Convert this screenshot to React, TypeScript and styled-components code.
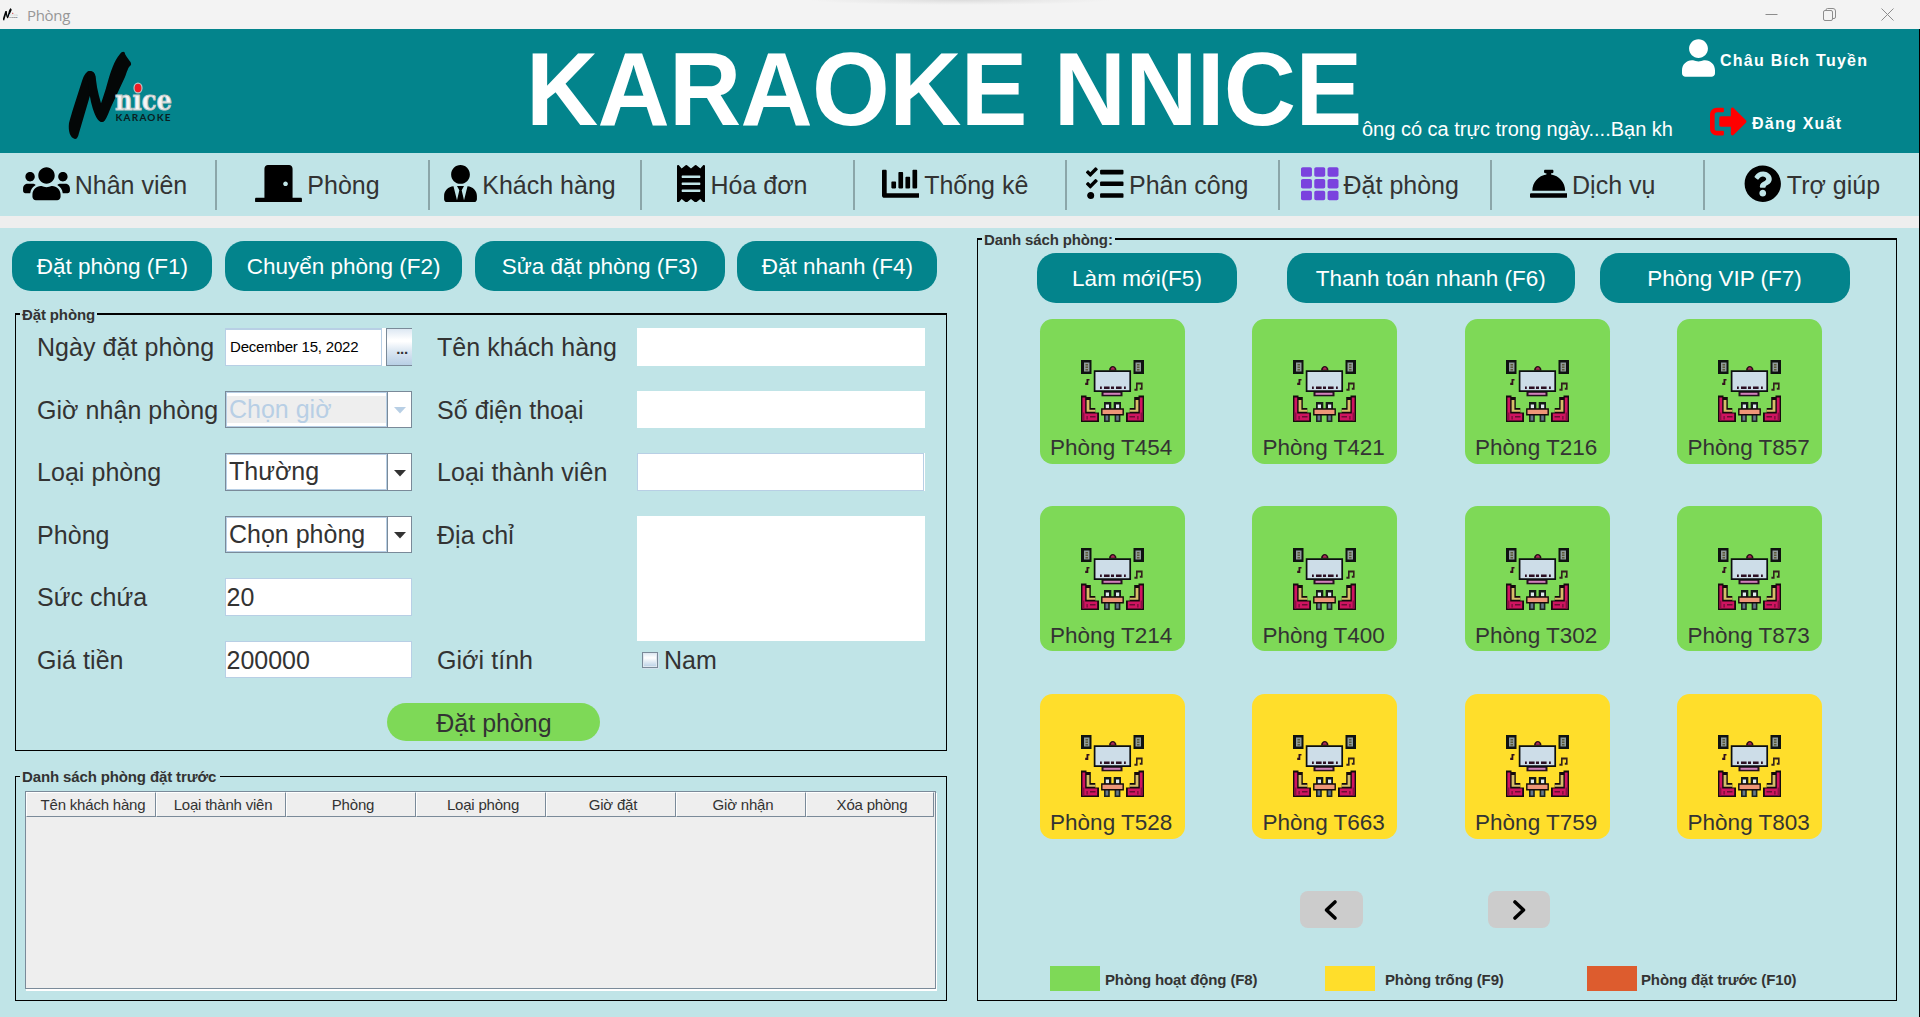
import React from "react";
import styled, { createGlobalStyle } from "styled-components";
import {
  FaUsers,
  FaDoorClosed,
  FaUserTie,
  FaReceipt,
  FaChartBar,
  FaTasks,
  FaTh,
  FaConciergeBell,
  FaQuestionCircle,
  FaUser,
  FaSignOutAlt,
} from "react-icons/fa";

const teal = "#03848c";
const pale = "#c0e4e7";
const grey = "#eeeeee";
const ink = "#333333";
const line = "#7a8a99";
const softLine = "#b8cfe5";
const green = "#7ed957";
const yellow = "#ffde2b";
const orange = "#dd5c2e";

const GlobalStyle = createGlobalStyle`
  * { box-sizing: border-box; }
  body {
    margin: 0;
    background: ${pale};
    color: ${ink};
    font-family: "Liberation Sans", Arial, sans-serif;
    overflow: hidden;
  }
  button, input { font: inherit; color: inherit; }
`;

const Window = styled.div`
  width: 1920px;
  height: 1017px;
  display: flex;
  flex-direction: column;
  background: ${pale};
  overflow: hidden;
`;

/* ---------- title bar ---------- */

const TitleBar = styled.header`
  height: 29px;
  flex: none;
  display: flex;
  align-items: center;
  padding: 0 26px 0 2px;
  background: radial-gradient(ellipse 150px 5px at 960px 0, #dcdcdc 0%, #ebebeb 60%, #f3f3f3 100%);
`;

const WindowTitle = styled.span`
  margin-left: 8px;
  font: 15px/20px "Open Sans", "Noto Sans", sans-serif;
  letter-spacing: -0.3px;
  color: #979797;
  flex: 1;
`;

const WindowControls = styled.div`
  display: flex;
  gap: 45px;
  margin-bottom: 1px;
`;

const Frame = styled.div`
  flex: 1;
  display: flex;
  flex-direction: column;
  border-right: 1px solid #000;
`;

/* ---------- banner ---------- */

const Banner = styled.div`
  height: 124px;
  flex: none;
  display: flex;
  background: ${teal};
  color: #fff;
  padding-left: 62px;
`;

const LogoSlot = styled.div`
  width: 464px;
  padding-top: 17px;
`;

const BrandTitle = styled.h1`
  margin: 0;
  width: 836px;
  padding-top: 3px;
  font-size: 100px;
  line-height: 114px;
  font-weight: bold;
  letter-spacing: -0.7px;
  white-space: nowrap;
  transform: scaleY(1.045);
`;

const Ticker = styled.div`
  width: 312px;
  height: 24px;
  margin-top: 88px;
  font-size: 20px;
  line-height: 24px;
  white-space: nowrap;
  overflow: hidden;
`;

const Account = styled.div`
  display: flex;
  flex-direction: column;
  padding: 10px 0 0 8px;
`;

const AccountRow = styled.div<{ $indent: number; $gap: number }>`
  display: flex;
  align-items: center;
  gap: 5px;
  height: 38px;
  margin-left: ${(p) => p.$indent}px;
  margin-bottom: ${(p) => p.$gap}px;
  font-size: 16px;
  font-weight: bold;
  letter-spacing: 1.25px;
  white-space: nowrap;
`;

const AccountText = styled.span`
  padding-top: 5px;
`;

/* ---------- navigation ---------- */

const Nav = styled.nav`
  height: 63px;
  flex: none;
  display: flex;
  padding: 7px 0 6px 4.5px;
`;

const NavItem = styled.a<{ $last: boolean }>`
  width: 212.5px;
  height: 50px;
  flex: none;
  display: flex;
  align-items: center;
  justify-content: center;
  gap: 5px;
  padding: ${(p) => (p.$last ? "0 0 0 3px" : "0 9.5px 0 0")};
  border-right: ${(p) => (p.$last ? "none" : "2px solid #8ba6a9")};
  font-size: 25px;
  line-height: 30px;
  white-space: nowrap;
  svg { color: #000; flex: none; margin-top: -3.5px; }
`;

const NavLabel = styled.span`
  margin-top: 0;
`;

const Strip = styled.div`
  height: 12px;
  flex: none;
  background: ${grey};
`;

/* ---------- body ---------- */

const Main = styled.main`
  flex: 1;
  display: flex;
  align-items: flex-start;
`;

const LeftSide = styled.section`
  width: 977px;
  padding-top: 13px;
`;

const Actions = styled.div`
  display: flex;
  gap: 12.5px;
  padding-left: 12.4px;
  margin-bottom: 15px;
`;

const Pill = styled.button<{ $w: number }>`
  width: ${(p) => p.$w}px;
  height: 50px;
  padding: 1px 0 0;
  border: 0;
  border-radius: 19px;
  background: ${teal};
  color: #fff;
  font-size: 22.5px;
  line-height: 50px;
  white-space: nowrap;
`;

const Panel = styled.fieldset<{ $h: number; $top: number }>`
  min-width: 0;
  height: ${(p) => p.$h}px;
  margin: 0;
  padding: 0;
  border: 1px solid #000;
  border-top-width: ${(p) => p.$top}px;
`;

const PanelTitle = styled.legend<{ $h: number; $right?: number }>`
  margin-left: 4px;
  padding: 0 ${(p) => p.$right ?? 2}px 0 2px;
  height: ${(p) => p.$h}px;
  font-size: 15px;
  font-weight: bold;
  letter-spacing: -0.13px;
  line-height: ${(p) => p.$h + 1}px;
`;

const LeftPanel = styled(Panel)`
  width: 932px;
  margin-left: 15px;
`;

const BookingsPanel = styled(LeftPanel)`
  margin-top: 17px;
`;

const Form = styled.div`
  display: grid;
  grid-template-columns: 187px 212px 200px 288px;
  grid-template-rows: repeat(6, 62.5px);
  padding: 6.4px 0 0 22px;
`;

const Label = styled.label<{ $col: number; $row: number }>`
  grid-column: ${(p) => p.$col};
  grid-row: ${(p) => p.$row};
  font-size: 25px;
  line-height: 38px;
  white-space: nowrap;
  letter-spacing: 0.05px;
  margin-left: ${(p) => (p.$col === 1 ? -1 : 0)}px;
`;

const Cell = styled.div<{ $col: number; $row: number; $span?: number }>`
  grid-column: ${(p) => p.$col};
  grid-row: ${(p) => p.$row} / span ${(p) => p.$span ?? 1};
  width: ${(p) => (p.$col === 2 ? 187 : 288)}px;
  height: ${(p) => (p.$span ? 125 : 37.5)}px;
`;

const TextBox = styled.input<{ $edge?: string }>`
  display: block;
  width: 100%;
  height: 100%;
  padding: 1px 0 0 0.5px;
  border: ${(p) => (p.$edge ? `1px solid ${p.$edge}` : "0")};
  background: #fff;
  font-size: 25px;
  outline: none;
`;

const TypeBox = styled(TextBox)`
  width: 287px;
  box-shadow: 1px 0 #fff;
`;

const AddressBox = styled.textarea`
  display: block;
  width: 100%;
  height: 100%;
  border: 0;
  resize: none;
  background: #fff;
`;

const DateField = styled.div`
  height: 100%;
  display: flex;
  gap: 4px;
  background: #fff;
`;

const DateText = styled.div`
  width: 157px;
  padding-left: 4px;
  border: 1px solid ${softLine};
  border-top-width: 2px;
  font-size: 15px;
  line-height: 34px;
  letter-spacing: -0.2px;
  color: #000;
`;

const DateButton = styled.button`
  width: 26px;
  padding: 3px 0 0 5px;
  border: 1px solid ${line};
  border-right: 0;
  background: linear-gradient(#dde8f3, #fff 30%, #fff 35%, #dde8f3 60%, #b8cfe5);
  font-size: 15px;
  font-weight: bold;
  line-height: 15px;
  letter-spacing: -0.4px;
`;

const ComboBox = styled.div`
  height: 100%;
  display: flex;
  background: #fff;
  border: 1px solid ${line};
`;

const ComboValue = styled.div<{ $off?: boolean }>`
  width: 161px;
  border: 1px solid ${softLine};
  padding: ${(p) => (p.$off ? "3px 0" : "0")};
  color: ${(p) => (p.$off ? softLine : ink)};
  display: flex;
  span {
    flex: 1;
    padding-left: 2px;
    background: ${(p) => (p.$off ? grey : "#fff")};
    font-size: 25px;
    line-height: ${(p) => (p.$off ? 26 : 32.5)}px;
    white-space: nowrap;
  }
`;

const ComboArrow = styled.div<{ $off?: boolean }>`
  flex: 1;
  border-left: 1px solid ${line};
  display: flex;
  align-items: center;
  justify-content: center;
  color: ${(p) => (p.$off ? softLine : ink)};
  svg { margin-top: 2px; }
`;

const CheckRow = styled.div`
  display: flex;
  align-items: center;
  height: 38px;
  padding-left: 5px;
  gap: 6px;
  font-size: 25px;
  line-height: 38px;
`;

const CheckBox = styled.span`
  width: 16px;
  height: 16px;
  border: 1px solid ${line};
  box-shadow: inset 0 0 0 1px #dfe8f1, 1px 1px #d3e1ee;
  background: linear-gradient(#dde8f3, #fff 35%, #b8cfe5);
`;

const Submit = styled.button`
  display: block;
  width: 213px;
  height: 38px;
  margin: 0 0 0 371px;
  padding: 1px 0 0 1px;
  border: 0;
  border-radius: 19px;
  background: ${green};
  font-size: 25px;
  line-height: 38px;
`;

const TableFrame = styled.div`
  width: 911px;
  height: 198px;
  margin: 6px 0 0 9px;
  border: 1px solid ${line};
  box-shadow: 1px 2px #fff;
  background: ${grey};
`;

const HeadRow = styled.div`
  display: grid;
  grid-template-columns: repeat(6, 130px) 128px;
  height: 25px;
`;

const HeadCell = styled.div`
  height: 25px;
  border: 1px solid ${line};
  border-left-color: #fff;
  border-top-color: #fff;
  padding-left: 4px;
  font-size: 15px;
  line-height: 24px;
  letter-spacing: -0.2px;
  text-align: center;
  white-space: nowrap;
`;

/* ---------- rooms ---------- */

const RightSide = styled.section`
  width: 920px;
  padding-top: 3px;
`;

const RoomActions = styled.div`
  display: flex;
  padding: 6px 0 0 59px;
  button:nth-child(2) { margin: 0 25px 0 50px; }
`;

const RoomGrid = styled.div`
  display: grid;
  grid-template-columns: repeat(4, 145px);
  grid-auto-rows: 145px;
  gap: 42.5px 67.5px;
  padding: 15.5px 0 0 61.7px;
`;

const RoomCard = styled.button<{ $color: string }>`
  display: flex;
  flex-direction: column;
  align-items: center;
  padding: 41.5px 0 0;
  border: 0;
  border-radius: 12.5px;
  background: ${(p) => p.$color};
  font-size: 22.5px;
  line-height: 26px;
  white-space: nowrap;
`;

const RoomName = styled.span`
  margin: 13px 2px 0 0;
`;

const Pager = styled.div`
  display: flex;
  gap: 125px;
  padding: 52.4px 0 0 322px;
`;

const PageButton = styled.button`
  width: 62.5px;
  height: 37.5px;
  padding: 0;
  border: 0;
  border-radius: 8px;
  background: #cccccc;
  display: flex;
  align-items: center;
  justify-content: center;
`;

const Legend = styled.div`
  display: grid;
  grid-template-columns: 275px 262px 1fr;
  padding: 37.4px 0 0 72px;
`;

const LegendItem = styled.div<{ $gap: number }>`
  display: flex;
  gap: ${(p) => p.$gap}px;
  font-size: 15px;
  font-weight: bold;
  line-height: 28px;
  letter-spacing: -0.13px;
  white-space: nowrap;
`;

const Swatch = styled.span<{ $color: string }>`
  width: 50px;
  height: 25px;
  background: ${(p) => p.$color};
`;

/* ---------- drawings ---------- */

const Logo = ({ width, height }: { width: number; height: number }) => (
  <svg width={width} height={height} viewBox="0 0 120 100">
    <g fill="#040707">
      <path d="M7 77 C9 70 10 66 12 60 L20 35 C22 29 24 26 27 25 C31 25 34 28 33 32 C31 39 29 46 27 53 L17 87 C16 91 15 93 13 93 C8 92 6 85 7 77Z" />
      <path d="M25 26 C31 23 34 28 34 34 C35 44 38 54 41 64 C45 73 43 76 39 76 C34 74 31 64 29 56 C27 47 26 37 25 26Z" />
      <path d="M35 70 C38 59 43 47 46 35 C49 25 52 15 58 8 C60 5 63 5 63 8 C66 14 70 16 69 19 C66 21 65 26 63 31 L49 61 C45 71 43 77 39 76Z" />
    </g>
    <text
      x="53"
      y="64"
      textLength="57"
      lengthAdjust="spacingAndGlyphs"
      fontFamily="DejaVu Serif, Liberation Serif, serif"
      fontWeight="bold"
      fontSize="27"
      fill="#f4f6f6"
      stroke="#c3cbcc"
      strokeWidth="1"
    >
      nıce
    </text>
    <ellipse cx="76" cy="42" rx="4.6" ry="5.6" fill="#b9c6c8" />
    <ellipse cx="76" cy="42" rx="3.4" ry="4.3" fill="#ef1c24" />
    <text
      x="53.5"
      y="75.3"
      textLength="55"
      fontFamily="Lato, sans-serif"
      fontWeight="bold"
      fontSize="10"
      fill="#0a2022"
    >
      KARAOKE
    </text>
  </svg>
);

const Sofa = () => (
  <g>
    <path d="M0 35.5h5.5v1.500h4.300v11h4.500v4.500h3.700v9.500H0z" fill="#140a0c" />
    <path d="M1.4 37.5h2.8v16h12v7H1.4z" fill="#cf1460" />
    <path d="M1.4 52.5h2v8h-2z" fill="#8c1044" />
    <path d="M5.6 40h2.8v9.8h6v2H5.6z" fill="#d6bd69" />
    <path d="M5.5 56h1.2v3.5H5.5zM9 56h5.5v1.6H9z" fill="#6b0c34" />
  </g>
);

const Speaker = () => (
  <g>
    <path d="M0 0h10.5v14H0z" fill="#0f1210" />
    <path d="M3 2.5h5.5v9H3z" fill="#8f9b9a" />
    <path d="M4.5 4h2.5v1.6H4.500zM4.5 6.6h2.5v1.400H4.5zM4.5 9h2.5v1.400H4.5z" fill="#5c5a38" />
  </g>
);

const KaraokeRoom = () => (
  <svg width="63" height="62" viewBox="0 0 63 62">
    <Speaker />
    <g transform="matrix(-1 0 0 1 63 0)">
      <Speaker />
    </g>
    <path d="M28 10.5c0-6 7.5-6 7.5 0z" fill="#2a0d17" />
    <path d="M29.8 9.8c0-3.4 4-3.4 4 0z" fill="#ad2c58" />
    <path d="M20.5 31h21v5.3h-21z" fill="#240f1f" />
    <path d="M22.5 32.8h17v2h-17z" fill="#d183bb" />
    <path d="M13.6 11.1h35.6v20H13.6z" fill="#cddde8" stroke="#0c0f10" strokeWidth="1.7" />
    <path
      d="M19 26.500h1.8v2.500H19zM23 26.500h5.6v2.500H23zM30 26.500h3v2.500h-3zM35 26.500h5.6v2.500H35zM43 26.500h1.8v2.500H43z"
      fill="#2c0f22"
    />
    <path d="M5.5 19h3v1.6H7.3V25H4.2v-2.2h1.3z" fill="#33101c" />
    <path d="M55 22.6h6.6v7.2h-2.8v-2h1.2v-3.2h-3.4v6.2h-3.2v-2h1.6z" fill="#33201c" />
    <Sofa />
    <g transform="matrix(-1 0 0 1 63 0)">
      <Sofa />
    </g>
    <path d="M23 42h7.3v7H23zM32.7 42H40v7h-7.3z" fill="#151a18" />
    <path d="M24.8 44.5H28v4h-3.2zM35 44.5h3.2v4H35z" fill="#dfe9ef" />
    <path d="M23 55h5.8v7H23zM33.6 55h5.8v7h-5.8z" fill="#1c2420" />
    <path d="M24.6 55h2.6v5.5h-2.6zM35.2 55h2.6v5.5h-2.6z" fill="#66788a" />
    <path d="M20.8 49h21.4v5.8H20.8z" fill="#ee9678" stroke="#140d0a" strokeWidth="1.4" />
  </svg>
);

const Triangle = () => (
  <svg width="12" height="7" viewBox="0 0 12 7">
    <path d="M0 0h12L6 6.5z" fill="currentColor" />
  </svg>
);

const Chevron = ({ flip }: { flip?: boolean }) => (
  <svg width="16" height="22" viewBox="0 0 16 22">
    <path
      d={flip ? "M4 3l8.500 8-8.500 8" : "M12 3l-8.500 8 8.500 8"}
      fill="none"
      stroke="#000"
      strokeWidth="3.6"
      strokeLinecap="round"
      strokeLinejoin="round"
    />
  </svg>
);

/* ---------- data ---------- */

const navItems = [
  { label: "Nhân viên", icon: <FaUsers size={37.5} style={{ width: 47 }} /> },
  { label: "Phòng", icon: <FaDoorClosed size={37.5} style={{ width: 47 }} /> },
  { label: "Khách hàng", icon: <FaUserTie size={37.5} style={{ width: 33 }} /> },
  { label: "Hóa đơn", icon: <FaReceipt size={37.5} style={{ width: 28 }} /> },
  { label: "Thống kê", icon: <FaChartBar size={37.5} /> },
  { label: "Phân công", icon: <FaTasks size={37.5} /> },
  { label: "Đặt phòng", icon: <FaTh size={37.5} style={{ color: "#7a42de" }} /> },
  { label: "Dịch vụ", icon: <FaConciergeBell size={37.5} /> },
  { label: "Trợ giúp", icon: <FaQuestionCircle size={37.5} /> },
];

const columns = [
  "Tên khách hàng",
  "Loại thành viên",
  "Phòng",
  "Loại phòng",
  "Giờ đặt",
  "Giờ nhận",
  "Xóa phòng",
];

const rooms = [
  ["T454", green],
  ["T421", green],
  ["T216", green],
  ["T857", green],
  ["T214", green],
  ["T400", green],
  ["T302", green],
  ["T873", green],
  ["T528", yellow],
  ["T663", yellow],
  ["T759", yellow],
  ["T803", yellow],
];

const Combo = ({ value, off }: { value: string; off?: boolean }) => (
  <ComboBox>
    <ComboValue $off={off}>
      <span>{value}</span>
    </ComboValue>
    <ComboArrow $off={off}>
      <Triangle />
    </ComboArrow>
  </ComboBox>
);

export default function App() {
  return (
    <>
      <GlobalStyle />
      <Window>
        <TitleBar>
          <Logo width={17} height={17} />
          <WindowTitle>Phòng</WindowTitle>
          <WindowControls>
            <svg width="13" height="13" viewBox="0 0 13 13" stroke="#8c8c8c" fill="none">
              <path d="M0.5 6.5h12" />
            </svg>
            <svg width="13" height="13" viewBox="0 0 13 13" stroke="#8c8c8c" fill="none">
              <rect x="0.5" y="2.5" width="9" height="10" rx="1.5" />
              <path d="M3 2.5V2Q3 .5 4.5 .5H10Q12.5 .5 12.5 3V9Q12.5 10.5 11 10.5H10" />
            </svg>
            <svg width="13" height="13" viewBox="0 0 13 13" stroke="#8c8c8c" fill="none">
              <path d="M0.5 0.5l12 12M12.5 0.5l-12 12" />
            </svg>
          </WindowControls>
        </TitleBar>

        <Frame>
          <Banner>
            <LogoSlot>
              <Logo width={120} height={100} />
            </LogoSlot>
            <BrandTitle>KARAOKE NNICE</BrandTitle>
            <Ticker>ông có ca trực trong ngày....Bạn kh</Ticker>
            <Account>
              <AccountRow $indent={0} $gap={25}>
                <FaUser size={38} style={{ width: 33 }} />
                <AccountText>Châu Bích Tuyền</AccountText>
              </AccountRow>
              <AccountRow $indent={28} $gap={0}>
                <FaSignOutAlt size={37} color="#ff0000" />
                <AccountText>Đăng Xuất</AccountText>
              </AccountRow>
            </Account>
          </Banner>

          <Nav>
            {navItems.map((item, i) => (
              <NavItem key={item.label} $last={i === navItems.length - 1}>
                {item.icon}
                <NavLabel>{item.label}</NavLabel>
              </NavItem>
            ))}
          </Nav>
          <Strip />

          <Main>
            <LeftSide>
              <Actions>
                <Pill $w={200}>Đặt phòng (F1)</Pill>
                <Pill $w={237.5}>Chuyển phòng (F2)</Pill>
                <Pill $w={250}>Sửa đặt phòng (F3)</Pill>
                <Pill $w={200}>Đặt nhanh (F4)</Pill>
              </Actions>

              <LeftPanel $h={445} $top={2}>
                <PanelTitle $h={16}>Đặt phòng</PanelTitle>
                <Form>
                  <Label $col={1} $row={1}>Ngày đặt phòng</Label>
                  <Cell $col={2} $row={1}>
                    <DateField>
                      <DateText>December 15, 2022</DateText>
                      <DateButton>...</DateButton>
                    </DateField>
                  </Cell>
                  <Label $col={1} $row={2}>Giờ nhận phòng</Label>
                  <Cell $col={2} $row={2}>
                    <Combo value="Chọn giờ" off />
                  </Cell>
                  <Label $col={1} $row={3}>Loại phòng</Label>
                  <Cell $col={2} $row={3}>
                    <Combo value="Thường" />
                  </Cell>
                  <Label $col={1} $row={4}>Phòng</Label>
                  <Cell $col={2} $row={4}>
                    <Combo value="Chọn phòng" />
                  </Cell>
                  <Label $col={1} $row={5}>Sức chứa</Label>
                  <Cell $col={2} $row={5}>
                    <TextBox $edge={softLine} defaultValue="20" />
                  </Cell>
                  <Label $col={1} $row={6}>Giá tiền</Label>
                  <Cell $col={2} $row={6}>
                    <TextBox $edge={softLine} defaultValue="200000" />
                  </Cell>

                  <Label $col={3} $row={1}>Tên khách hàng</Label>
                  <Cell $col={4} $row={1}>
                    <TextBox />
                  </Cell>
                  <Label $col={3} $row={2}>Số điện thoại</Label>
                  <Cell $col={4} $row={2}>
                    <TextBox />
                  </Cell>
                  <Label $col={3} $row={3}>Loại thành viên</Label>
                  <Cell $col={4} $row={3}>
                    <TypeBox $edge={softLine} />
                  </Cell>
                  <Label $col={3} $row={4}>Địa chỉ</Label>
                  <Cell $col={4} $row={4} $span={2}>
                    <AddressBox />
                  </Cell>
                  <Label $col={3} $row={6}>Giới tính</Label>
                  <Cell $col={4} $row={6}>
                    <CheckRow>
                      <CheckBox />
                      Nam
                    </CheckRow>
                  </Cell>
                </Form>
                <Submit>Đặt phòng</Submit>
              </LeftPanel>

              <BookingsPanel $h={233} $top={1}>
                <PanelTitle $h={17} $right={4}>Danh sách phòng đặt trước</PanelTitle>
                <TableFrame>
                  <HeadRow>
                    {columns.map((c) => (
                      <HeadCell key={c}>{c}</HeadCell>
                    ))}
                  </HeadRow>
                </TableFrame>
              </BookingsPanel>
            </LeftSide>

            <RightSide>
              <Panel $h={770} $top={2}>
                <PanelTitle $h={16}>Danh sách phòng:</PanelTitle>
                <RoomActions>
                  <Pill $w={200}>Làm mới(F5)</Pill>
                  <Pill $w={287.5}>Thanh toán nhanh (F6)</Pill>
                  <Pill $w={250}>Phòng VIP (F7)</Pill>
                </RoomActions>
                <RoomGrid>
                  {rooms.map(([name, color]) => (
                    <RoomCard key={name} $color={color}>
                      <KaraokeRoom />
                      <RoomName>Phòng {name}</RoomName>
                    </RoomCard>
                  ))}
                </RoomGrid>
                <Pager>
                  <PageButton>
                    <Chevron />
                  </PageButton>
                  <PageButton>
                    <Chevron flip />
                  </PageButton>
                </Pager>
                <Legend>
                  <LegendItem $gap={5}>
                    <Swatch $color={green} />
                    Phòng hoạt động (F8)
                  </LegendItem>
                  <LegendItem $gap={10}>
                    <Swatch $color={yellow} />
                    Phòng trống (F9)
                  </LegendItem>
                  <LegendItem $gap={4}>
                    <Swatch $color={orange} />
                    Phòng đặt trước (F10)
                  </LegendItem>
                </Legend>
              </Panel>
            </RightSide>
          </Main>
        </Frame>
      </Window>
    </>
  );
}
